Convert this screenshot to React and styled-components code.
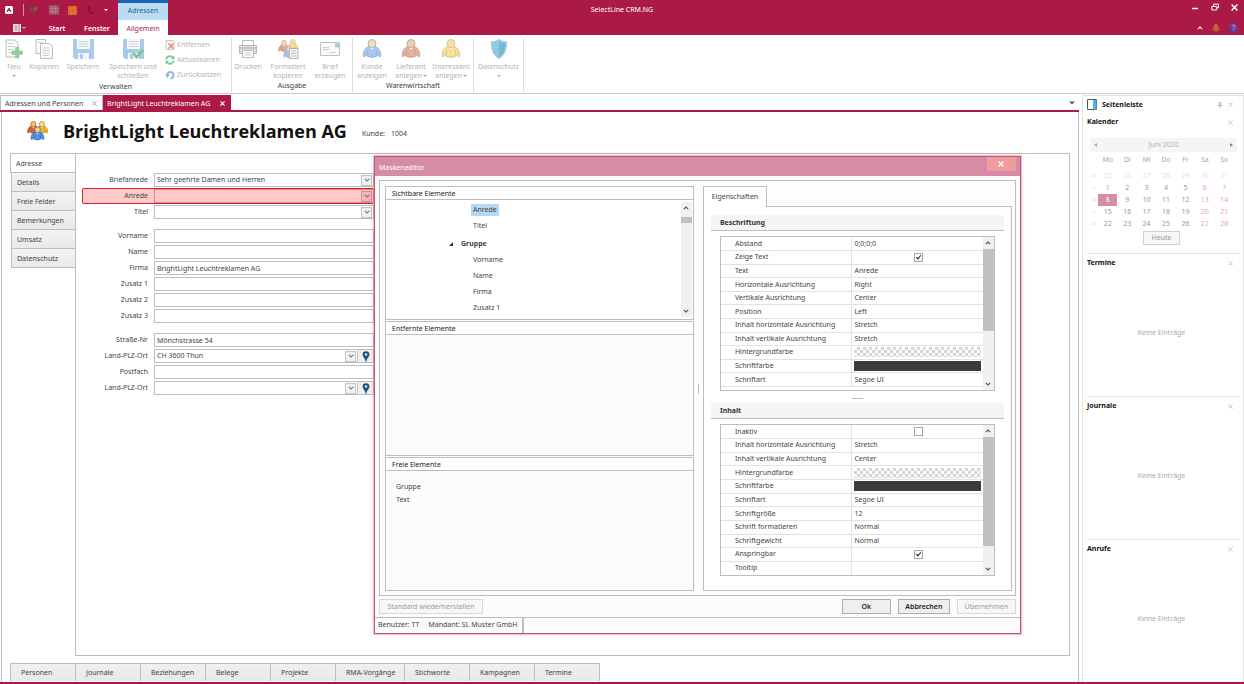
import React from "react";
import styled, { createGlobalStyle, css } from "styled-components";

const FONT = '"Noto Sans", "Open Sans", sans-serif';
const C = {
  brand: "#ab1a47",
  pink: "#d68ca4",
  line: "#bdbdbd",
  soft: "#e2e2e2",
  text: "#444444",
  dim: "#b4b4b4",
};

const Global = createGlobalStyle`
  *, *::before, *::after { box-sizing: border-box; }
  body { margin: 0; background: #fff; color: ${C.text}; font: 7px/10px ${FONT}; }
  button, input, select { font: inherit; color: inherit; margin: 0; padding: 0; border: 0; border-radius: 0; background: none; }
  h1, h2, h3, ul { margin: 0; padding: 0; font-size: inherit; list-style: none; }
  svg { display: block; flex: none; }
`;

const Page = styled.div`
  display: flex;
  flex-direction: column;
  min-height: 100vh;
  position: relative;
  border-bottom: 2px solid ${C.brand};
`;

/* ---------- title bar ---------- */
const TitleBar = styled.header`
  display: grid;
  grid-template-columns: 1fr auto 1fr;
  height: 20px;
  background: ${C.brand};
  color: #fff;
  align-items: center;
`;
const TitleLeft = styled.div`
  display: flex;
  height: 20px;
`;
const QuickAccess = styled.div`
  display: flex;
  align-items: center;
  gap: 9px;
  width: 118px;
  padding-left: 4px;
`;
const ContextTab = styled.div`
  width: 50px;
  border-top: 3px solid #1c62b0;
  background: #b9dbf4;
  color: #2a5f95;
  text-align: center;
  line-height: 15px;
`;
const TitleText = styled.div`
  line-height: 20px;
`;
const WindowButtons = styled.div`
  display: flex;
  justify-content: flex-end;
  gap: 12px;
  padding: 0 6px 6px 0;
`;
const IconButton = styled.button`
  display: flex;
  align-items: center;
  justify-content: center;
  color: ${(p) => p.$color || "inherit"};
`;

const TabStrip = styled.nav`
  display: flex;
  height: 15px;
  background: ${C.brand};
  color: #fff;
  align-items: stretch;
`;
const FileMenu = styled.button`
  display: flex;
  align-items: center;
  justify-content: center;
  gap: 1px;
  width: 38px;
`;
const RibbonTab = styled.button`
  width: ${(p) => p.$w}px;
  line-height: 17px;
  font-weight: ${(p) => (p.$active ? 400 : 600)};
  background: ${(p) => (p.$active ? "#fff" : "transparent")};
  color: ${(p) => (p.$active ? C.brand : "#fff")};
`;
const StripEnd = styled.div`
  display: flex;
  align-items: center;
  gap: 9px;
  margin-left: auto;
  padding-right: 6px;
`;

/* ---------- ribbon ---------- */
const Ribbon = styled.div`
  display: flex;
  height: 59px;
  padding: 3px 0 1px;
  border-bottom: 1px solid #d9c3ca;
`;
const Group = styled.section`
  display: flex;
  flex-direction: column;
  width: ${(p) => p.$w}px;
  border-right: 1px solid #dcdcdc;
`;
const GroupItems = styled.div`
  display: flex;
  flex: 1;
`;
const GroupName = styled.div`
  text-align: center;
  color: #3c3c3c;
  line-height: 12px;
`;
const BigButton = styled.button`
  display: flex;
  flex-direction: column;
  align-items: center;
  width: ${(p) => p.$w}px;
  color: ${C.dim};
  line-height: 9px;
  white-space: nowrap;
  & > svg { margin: 1px 0 3px; }
`;
const Caption = styled.span`
  display: flex;
  align-items: center;
  justify-content: center;
  gap: 1px;
  height: 9px;
`;
const SmallStack = styled.div`
  display: flex;
  flex-direction: column;
  gap: 3px;
  padding: 1px 0 0 5px;
`;
const SmallButton = styled.button`
  display: flex;
  align-items: center;
  gap: 2px;
  height: 12px;
  color: ${C.dim};
`;
const Caret = styled.span`
  border: 2px solid transparent;
  border-top-color: ${(p) => p.$color || "#a8a8a8"};
  border-bottom-width: 0;
`;

/* ---------- workspace ---------- */
const Workspace = styled.div`
  display: flex;
  flex: 1;
  gap: 3px;
  padding-top: 1px;
`;
const Main = styled.main`
  display: flex;
  flex-direction: column;
  flex: 1;
  min-width: 0;
`;
const DocTabs = styled.div`
  display: flex;
  align-items: stretch;
  height: 17px;
  border-bottom: 2px solid ${C.brand};
`;
const DocTab = styled.div`
  display: flex;
  align-items: center;
  justify-content: space-between;
  width: ${(p) => p.$w}px;
  padding: 1px 5px 0 4px;
  white-space: nowrap;
  border: 1px solid ${C.line};
  border-bottom: 0;
  ${(p) =>
    p.$active &&
    css`
      background: ${C.brand};
      border-color: ${C.brand};
      padding-left: 3px;
      color: #fff;
    `}
`;
const DocMenu = styled.button`
  margin-left: auto;
  padding-right: 4px;
`;
const Doc = styled.div`
  display: flex;
  flex-direction: column;
  flex: 1;
  border: 1px solid ${C.line};
  border-width: 0 1px;
  margin-left: 1px;
  padding-left: 8px;
`;
const DocHeader = styled.div`
  display: flex;
  align-items: center;
  gap: 15px;
  height: 41px;
  padding: 0 0 4px 17px;
  h1 {
    font-family: "Open Sans", sans-serif;
    font-size: 18px;
    line-height: 26px;
    color: #111;
  }
`;
const Customer = styled.div`
  display: flex;
  gap: 6px;
  padding-top: 6px;
`;
const DocBody = styled.div`
  display: flex;
  flex: 1;
  margin-right: 8px;
`;
const SideTabs = styled.div`
  display: flex;
  flex-direction: column;
  width: 66px;
`;
const SideTab = styled.button`
  height: 19px;
  padding: 1px 0 0 5px;
  text-align: left;
  border: 1px solid ${C.line};
  border-top: 0;
  background: linear-gradient(#f3f3f3, #e9e9e9);
  margin-left: 1px;
  ${(p) =>
    p.$active &&
    css`
      background: #fff;
      border-top: 1px solid ${C.line};
      border-right: 0;
      height: 20px;
      margin-left: 0;
    `}
`;
const FormPanel = styled.form`
  flex: 1;
  min-width: 0;
  border: 1px solid ${C.line};
  margin-left: -1px;
  padding: 18px 0 0 6px;
`;
const FormRows = styled.div`
  display: flex;
  flex-direction: column;
  width: 292px;
`;
const Row = styled.div`
  display: flex;
  align-items: center;
  height: 16px;
  margin-top: ${(p) => (p.$gap ? 8 : 0)}px;
  box-shadow: ${(p) => (p.$marked ? "inset 0 0 0 1px #d3202c" : "none")};
  background: ${(p) => (p.$marked ? "#ffc9c9" : "transparent")};
  border-radius: 2px;
`;
const RowLabel = styled.label`
  width: 72px;
  padding-right: 6px;
  text-align: right;
`;
const Field = styled.div`
  display: flex;
  flex: 1;
  height: 14px;
  align-items: center;
  border: 1px solid ${(p) => (p.$marked ? "#e08a8a" : C.line)};
`;
const TextInput = styled.input`
  width: 100%;
  height: 12px;
  padding-left: 2px;
  outline: 0;
`;
const Select = styled.select`
  appearance: none;
  flex: 1;
  min-width: 0;
  height: 12px;
  padding-left: 2px;
  outline: 0;
`;
const DropMark = styled.span`
  display: flex;
  align-items: center;
  justify-content: center;
  width: 11px;
  height: 11px;
  margin-right: 1px;
  border: 1px solid ${(p) => (p.$marked ? "#d98f8f" : "#c6c6c6")};
  background: ${(p) => (p.$marked ? "#f3b5b5" : "#f1f1f1")};
  pointer-events: none;
`;
const PinButton = styled.button`
  display: flex;
  align-items: center;
  justify-content: center;
  width: 16px;
  height: 12px;
  background: #f0f0f0;
  border-left: 1px solid #c6c6c6;
`;
const BottomTabs = styled.div`
  display: flex;
  margin: 7px 0 1px;
  border-left: 1px solid ${C.line};
`;
const BottomTab = styled.button`
  width: ${(p) => (p.$wide ? 69 : 65)}px;
  height: 18px;
  padding: 1px 0 0 10px;
  text-align: left;
  white-space: nowrap;
  border: 1px solid ${C.line};
  border-left: 0;
  border-bottom: 0;
  background: linear-gradient(#f0f0f0, #e8e8e8);
`;

/* ---------- sidebar ---------- */
const Sidebar = styled.aside`
  display: flex;
  flex-direction: column;
  width: 162px;
  border: 1px solid ${C.soft};
  border-bottom: 0;
  padding: 0 2px 0 4px;
`;
const PanelTitle = styled.div`
  display: flex;
  align-items: center;
  gap: 5px;
  height: ${(p) => p.$h || 18}px;
  padding-right: 8px;
  h2, h3 {
    flex: 1;
    color: #111;
    font-weight: 700;
  }
`;
const SidePanel = styled.section`
  display: flex;
  flex-direction: column;
  flex: ${(p) => (p.$grow ? "1" : "none")};
  border-bottom: 1px solid ${C.soft};
  &:last-child { border-bottom: 0; }
`;
const Empty = styled.p`
  display: flex;
  flex: 1;
  align-items: center;
  justify-content: center;
  margin: 0 5px 0 0;
  padding-bottom: 2px;
  color: #aaa;
`;
const CalHead = styled.div`
  display: flex;
  align-items: center;
  justify-content: space-between;
  height: 14px;
  margin: 7px 4px 0 3px;
  padding: 0 4px;
  background: #f5f5f5;
  color: #b0b0b0;
`;
const CalTable = styled.table`
  width: 145px;
  margin-left: 2px;
  border-collapse: collapse;
  table-layout: fixed;
  text-align: center;
  th, td { padding: 0; font-weight: 400; height: 12px; }
  thead th { height: 18px; padding-bottom: 2px; color: #a9a9a9; }
  th:first-child { width: 9px; }
  tbody th { font-size: 4px; color: #ddd; }
`;
const Day = styled.td`
  color: ${(p) => (p.$out ? (p.$end ? "#f7dede" : "#e2e2e2") : p.$end ? "#eda5a5" : "#999")};
  ${(p) =>
    p.$today &&
    css`
      background: ${C.pink};
      color: #fff;
    `}
`;
const TodayRow = styled.div`
  display: flex;
  justify-content: center;
  margin: 1px 5px 8px 0;
`;
const TodayButton = styled.button`
  width: 37px;
  height: 14px;
  border: 1px solid #d0d0d0;
  background: #f6f6f6;
  color: #999;
`;

/* ---------- dialog ---------- */
const Dialog = styled.div`
  position: absolute;
  left: 374px;
  top: 156px;
  width: 52vw;
  min-width: 640px;
  border: 1px solid #b5597a;
  background: #fdfcfc;
  box-shadow: 0 0 0 1px rgba(214, 110, 140, 0.35), 0 0 5px rgba(200, 60, 100, 0.25);
`;
const DialogTitle = styled.div`
  display: flex;
  align-items: stretch;
  height: 19px;
  padding: 0 4px 5px;
  background: ${C.pink};
  color: #fff;
  h2 {
    flex: 1;
    font-weight: 400;
    line-height: 21px;
  }
`;
const CloseButton = styled.button`
  display: flex;
  align-items: center;
  justify-content: center;
  width: 29px;
  background: #ef9c9c;
  color: #fff;
`;
const DialogBody = styled.div`
  display: flex;
  gap: 9px;
  margin: 4px 4px 0;
  padding: 5px 3px 4px 5px;
  border: 1px solid ${C.line};
  background: #fdfdfd;
`;
const Lists = styled.div`
  display: flex;
  flex-direction: column;
  gap: 1px;
  flex: 1;
  position: relative;
`;
const ListBox = styled.section`
  display: flex;
  flex-direction: column;
  flex: 1 0 0;
  border: 1px solid ${C.line};
`;
const ListTitle = styled.h3`
  height: 13px;
  padding-left: 6px;
  border-bottom: 1px solid ${C.line};
  background: #fff;
  color: #222;
  font-weight: 400;
  line-height: 14px;
`;
const ListArea = styled.div`
  display: flex;
  flex: 1;
  padding: ${(p) => (p.$tree ? "2px 1px" : "9px 10px")};
  background: ${(p) => (p.$tree ? "#fff" : "repeating-linear-gradient(#fcfcfc 0 3px, #fafafa 3px 4px)")};
`;
const Tree = styled.ul`
  flex: 1;
`;
const TreeItem = styled.li`
  display: flex;
  align-items: center;
  gap: ${(p) => (p.$group ? 6 : 0)}px;
  height: 16px;
  padding-left: ${(p) => (p.$group ? 62 : 84)}px;
  margin-top: ${(p) => (p.$group ? 2 : 0)}px;
  font-weight: ${(p) => (p.$group ? 700 : 400)};
  span {
    padding: 1px 2px;
    background: ${(p) => (p.$selected ? "#b5d9f5" : "transparent")};
  }
`;
const FreeList = styled.ul`
  line-height: 13px;
`;
const Splitter = styled.div`
  position: absolute;
  left: 100%;
  top: 49%;
  width: 1px;
  height: 10px;
  margin-left: 4px;
  background: ${C.line};
`;
const Properties = styled.div`
  display: flex;
  flex-direction: column;
  flex: 1;
`;
const PropTab = styled.button`
  width: 64px;
  height: 21px;
  border: 1px solid ${C.line};
  border-bottom: 0;
  background: #fff;
  margin-bottom: -1px;
  z-index: 1;
`;
const PropPanel = styled.div`
  border: 1px solid ${C.line};
  background: #fff;
  padding: 8px 7px 14px;
`;
const SectionTitle = styled.h3`
  height: 16px;
  padding-left: 9px;
  border-bottom: 1px solid ${C.line};
  background: #f5f5f5;
  color: #333;
  line-height: 16px;
`;
const PropBox = styled.div`
  display: flex;
  margin: 5px 9px 0;
  border: 1px solid ${C.line};
`;
const PropTable = styled.table`
  flex: 1;
  height: 150px;
  margin-bottom: ${(p) => (p.$rest ? 3 : 0)}px;
  border-collapse: collapse;
  table-layout: fixed;
  line-height: 8px;
  th, td {
    height: 13px;
    padding: 0;
    border-bottom: 1px solid ${C.soft};
    text-align: left;
    font-weight: 400;
    white-space: nowrap;
  }
  th { padding-left: 14px; width: 50%; }
  td { padding-left: 2px; border-left: 1px solid ${C.soft}; }
  ${(p) => !p.$rest && "tr:last-child > * { border-bottom: 0; }"}
`;
const Swatch = styled.div`
  height: 10px;
  margin-right: 2px;
  background: ${(p) => (p.$solid ? "#3b3b3b" : "repeating-conic-gradient(#d4d4d4 0 25%, #fff 0 50%) 0 0 / 6px 6px")};
`;
const Check = styled.input`
  appearance: none;
  display: block;
  position: relative;
  width: 9px;
  height: 9px;
  margin: 0 auto;
  border: 1px solid #a5a5a5;
  background: #fff;
  &:checked::after {
    content: "";
    position: absolute;
    left: 2px;
    top: 0;
    width: 3px;
    height: 5px;
    border: solid #222;
    border-width: 0 1px 1px 0;
    transform: rotate(40deg);
  }
`;
const Grip = styled.div`
  width: 11px;
  margin: 7px auto 4px;
  border-top: 1px solid ${C.line};
`;
const Bar = styled.div`
  display: flex;
  flex-direction: column;
  width: 11px;
  background: #f0f0f0;
  button {
    display: flex;
    align-items: center;
    justify-content: center;
    height: 12px;
  }
`;
const Track = styled.div`
  flex: 1;
  padding-top: ${(p) => p.$offset || 0}px;
`;
const Thumb = styled.div`
  height: ${(p) => p.$h}px;
  background: #c1c1c1;
`;
const Actions = styled.div`
  display: flex;
  gap: 7px;
  padding: 3px 4px;
`;
const ActionButton = styled.button`
  width: ${(p) => p.$w}px;
  height: 15px;
  margin-right: ${(p) => (p.$push ? "auto" : 0)};
  border: 1px solid #adadad;
  background: #efefef;
  color: #222;
  font-weight: 600;
  &:disabled {
    border-color: #d8d8d8;
    background: #f7f7f7;
    color: #9c9c9c;
    font-weight: 400;
  }
`;
const Status = styled.div`
  display: flex;
  border-top: 1px solid ${C.line};
  span {
    padding: 2px 4px 3px 3px;
  }
  span + span {
    padding-left: 5px;
    border-right: 2px solid ${C.line};
  }
`;

/* ---------- drawings ---------- */
const Cross = ({ s = 5, w = 1, c = "currentColor" }) => (
  <svg width={s} height={s} viewBox="0 0 6 6" stroke={c} strokeWidth={w} aria-hidden="true">
    <path d="M.5.5l5 5M5.5.5l-5 5" />
  </svg>
);
const Chevron = ({ up, c = "#555" }) => (
  <svg width="6" height="4" viewBox="0 0 6 4" fill="none" stroke={c} strokeWidth="1.1" aria-hidden="true">
    <path d={up ? "M.8 3.2L3 1l2.2 2.2" : "M.8.8L3 3 5.2.8"} />
  </svg>
);
const Pin = () => (
  <svg width="8" height="11" viewBox="0 0 8 11" aria-hidden="true">
    <path d="M4 .3a3.4 3.4 0 0 1 3.4 3.4C7.400 6 4.700 7 4.400 10.800H3.600C3.300 7 .6 6 .6 3.700A3.400 3.400 0 0 1 4 .3z" fill="#17527f" />
    <circle cx="4" cy="3.500" r="1.300" fill="#d8ecf7" />
  </svg>
);
const NewIcon = () => (
  <svg width="20" height="20" viewBox="0 0 20 20" fill="none">
    <path d="M2 1h9l3 3v14H2z" fill="#fafafa" stroke="#bdbdbd" />
    <path d="M4 4.500h5M4 7.500h7M4 10.500h6M4 13.500h5" stroke="#cfcfcf" />
    <path d="M11.500 8.500h3.500v3.500h3.500v3.500H15V19h-3.500v-3.500H8V12h3.500z" fill="#8fd09a" stroke="#7bc088" strokeWidth=".5" />
  </svg>
);
const CopyIcon = () => (
  <svg width="20" height="20" viewBox="0 0 20 20" fill="#fcfcfc" stroke="#bdbdbd">
    <path d="M2 .5h9.500v14H2z" />
    <path d="M6.500 4.500H15l3.500 3V19.500h-12z" />
    <path d="M4 3.500h5M8.500 9h7M8.500 11.500h7M8.500 14h7M8.500 16.500h7" stroke="#cfcfcf" />
  </svg>
);
const SaveIcon = ({ check }) => (
  <svg width="21" height="20" viewBox="0 0 21 20">
    <path d="M0 0h21v20H2l-2-2z" fill="#a9cbe9" />
    <path d="M4 0h13v10H4z" fill="#f6f9fb" />
    <path d="M5.500 2.500h10M5.500 5h10M5.500 7.500h10" stroke="#c9d3da" />
    <path d="M5 14h11v6H5z" fill="#eef3f7" />
    <path d="M7 15h3v5H7z" fill="#a9cbe9" />
    {check && <path d="M10 14l3.500 4L20 11" fill="none" stroke="#7cc58a" strokeWidth="2.600" />}
  </svg>
);
const RemoveIcon = () => (
  <svg width="10" height="10" viewBox="0 0 10 10" fill="none">
    <path d="M1 .5h7l1 1v8H1z" fill="#f5f5f5" stroke="#d0c4c0" />
    <path d="M3.500 3.500l5 5M8.500 3.500l-5 5" stroke="#ef8f78" strokeWidth="1.600" />
  </svg>
);
const RefreshIcon = () => (
  <svg width="10" height="10" viewBox="0 0 10 10" fill="none" stroke="#84c493" strokeWidth="1.700">
    <path d="M1.200 4.500A3.800 3.800 0 0 1 8 2.700M8.800 5.500A3.800 3.800 0 0 1 2 7.300" />
    <path d="M9.500 .5v3.700H5.800zM.5 9.500V5.800h3.700z" fill="#84c493" stroke="none" />
  </svg>
);
const ResetIcon = () => (
  <svg width="10" height="10" viewBox="0 0 10 10" fill="none">
    <path d="M2 5.500A3.300 3.300 0 1 1 5.500 8.500" stroke="#8db6dc" strokeWidth="2" />
    <path d="M0 4.500h5L2.500 8z" fill="#8db6dc" />
  </svg>
);
const PrinterIcon = () => (
  <svg width="20" height="20" viewBox="0 0 20 20" fill="#f4f4f4" stroke="#b9b9b9">
    <path d="M4.500 1.500h11v6h-11z" fill="#fff" />
    <path d="M1.500 6.500h17v8h-17z" fill="#dedede" />
    <path d="M2 9h16" stroke="#aaa" />
    <path d="M4.500 11.500h11v7h-11z" fill="#fff" />
    <path d="M6.500 14h7M6.500 16h7" stroke="#cfcfcf" />
  </svg>
);
const Figure = ({ x, y, k = 1, fill, line, skin = "#f5dfae" }) => (
  <g transform={`translate(${x} ${y}) scale(${k})`} stroke={line}>
    <path d="M6.500 8C3 9 .8 13 .8 17c0 2 1.700 2 2.700.5L5 14.500V18q5 2.500 10 0v-3.500l1.500 3c1 1.500 2.700 1.500 2.700-.5 0-4-2.200-8-5.700-9z" fill={fill} />
    <path d="M5 14.500l1-3M15 14.500l-1-3" fill="none" />
    <path d="M7 8l3 4 3-4z" fill="#fff" strokeWidth=".6" />
    <circle cx="10" cy="4.800" r="4.200" fill={skin} />
  </g>
);
const PersonIcon = ({ fill, line, skin }) => (
  <svg width="20" height="20" viewBox="0 0 20 21">
    <Figure x={0} y={0} fill={fill} line={line} skin={skin} />
  </svg>
);
const FormatIcon = () => (
  <svg width="21" height="20" viewBox="0 0 21 20">
    <Figure x={9} y={0} k={0.58} fill="#f5dc96" line="#d9bc74" />
    <Figure x={0} y={1} k={0.6} fill="#e3a48e" line="#cf9680" />
    <Figure x={5} y={7} k={0.6} fill="#a5c8ef" line="#8db1d9" />
    <path d="M11.500 9.500H20v10h-8.500z" fill="#fafafa" stroke="#b0b0b0" />
    <path d="M13 12h5.500M13 14.500h5.500M13 17h5.500" stroke="#bbb" />
  </svg>
);
const LetterIcon = () => (
  <svg width="20" height="20" viewBox="0 0 20 20" fill="none">
    <path d="M.5 3.500h19v13H.5z" fill="#fafafa" stroke="#c0c0c0" />
    <path d="M3 8.500h6M3 10.500h6M9 13.500h7" stroke="#ccc" />
    <path d="M15 4.500h4V9l-2-1-2 .5z" fill="#9cc8e4" />
  </svg>
);
const ShieldIcon = () => (
  <svg width="20" height="20" viewBox="0 0 20 21">
    <path d="M10 .5c2.500 1.700 5 2.500 8 2.500 0 8-1.500 13.500-8 17.500C3.500 16.500 2 11 2 3c3 0 5.500-.8 8-2.500z" fill="#8ccbe2" stroke="#a8c4d2" />
    <path d="M10 2.500c2 1.200 4 2 6.300 2.100-.2 6-1.300 10.500-6.300 13.900z" fill="#71b9da" />
  </svg>
);
const GroupLogo = () => (
  <svg width="21" height="20" viewBox="0 0 21 20">
    <Figure x={0} y={0} k={0.64} fill="#d9602c" line="#a8522a" skin="#f2c261" />
    <Figure x={8.500} y={0} k={0.64} fill="#f3b62c" line="#b8801e" skin="#f8d983" />
    <Figure x={3.500} y={5.500} k={0.7} fill="#4c94e6" line="#2a68a8" skin="#f4cf7c" />
  </svg>
);

const QuickIcons = () => (
  <>
    <svg width="10" height="10" viewBox="0 0 10 10">
      <rect x="1" y="1" width="8" height="8" rx="1.500" fill="#fff" />
      <path d="M3 7l2-4 2 4M3 5.500h4" stroke={C.brand} fill="none" />
    </svg>
    <svg width="16" height="12" viewBox="0 0 16 12">
      <path d="M-.5 0" />
      <circle cx="8" cy="4.500" r="1.700" fill="#8c4a2c" />
      <circle cx="12.500" cy="4.500" r="1.700" fill="#96602c" />
      <path d="M6 6h8.500L10.500 10z" fill="#7a4050" />
      <path d="M.5 0v12" stroke="#d88aa2" />
    </svg>
    <svg width="11" height="10" viewBox="0 0 11 10">
      <path d="M1 .5h10v9H1z" fill="#a45a6e" />
      <path d="M1 3.500h10M1 6.500h10M4.300.5v9M7.600.5v9" stroke="#b98c98" strokeWidth=".6" />
    </svg>
    <svg width="9" height="9" viewBox="0 0 9 9">
      <path d="M0 0h9v9H0z" fill="#d8642c" />
      <path d="M0 3h9M0 6h9M3 0v9M6 0v9" stroke="#e88a50" strokeWidth=".5" />
    </svg>
    <svg width="9" height="10" viewBox="0 0 9 10">
      <path d="M2.500.5C-.5 4.500 3 9.500 8 9l-1.500-2.500-1.500.5Q3.500 5.500 3.500 4L5 3z" fill="#7d1536" />
    </svg>
  </>
);

/* ---------- content ---------- */
const Scroll = ({ offset, thumb }) => (
  <Bar>
    <button type="button" aria-label="Nach oben"><Chevron up /></button>
    <Track $offset={offset}><Thumb $h={thumb} /></Track>
    <button type="button" aria-label="Nach unten"><Chevron /></button>
  </Bar>
);

const Big = ({ w, icon, lines, caret, below }) => (
  <BigButton $w={w} type="button">
    {icon}
    {lines.map((l, i) => (
      <Caption key={l}>
        {l}
        {caret && i === lines.length - 1 && <Caret />}
      </Caption>
    ))}
    {below && <Caption><Caret /></Caption>}
  </BigButton>
);

const fields = [
  { id: "briefanrede", label: "Briefanrede", value: "Sehr geehrte Damen und Herren", select: true },
  { id: "anrede", label: "Anrede", value: "", select: true, marked: true },
  { id: "titel", label: "Titel", value: "", select: true },
  { id: "vorname", label: "Vorname", value: "", gap: true },
  { id: "name", label: "Name", value: "" },
  { id: "firma", label: "Firma", value: "BrightLight Leuchtreklamen AG" },
  { id: "zusatz1", label: "Zusatz 1", value: "" },
  { id: "zusatz2", label: "Zusatz 2", value: "" },
  { id: "zusatz3", label: "Zusatz 3", value: "" },
  { id: "strasse", label: "Straße-Nr", value: "Mönchstrasse 54", gap: true },
  { id: "ort", label: "Land-PLZ-Ort", value: "CH 3600 Thun", select: true, pin: true },
  { id: "postfach", label: "Postfach", value: "" },
  { id: "ort2", label: "Land-PLZ-Ort", value: "", select: true, pin: true },
];

const caption = [
  ["Abstand", "0;0;0;0"],
  ["Zeige Text", true],
  ["Text", "Anrede"],
  ["Horizontale Ausrichtung", "Right"],
  ["Vertikale Ausrichtung", "Center"],
  ["Position", "Left"],
  ["Inhalt horizontale Ausrichtung", "Stretch"],
  ["Inhalt vertikale Ausrichtung", "Stretch"],
  ["Hintergrundfarbe", <Swatch />],
  ["Schriftfarbe", <Swatch $solid />],
  ["Schriftart", "Segoe UI"],
];
const content = [
  ["Inaktiv", false],
  ["Inhalt horizontale Ausrichtung", "Stretch"],
  ["Inhalt vertikale Ausrichtung", "Center"],
  ["Hintergrundfarbe", <Swatch />],
  ["Schriftfarbe", <Swatch $solid />],
  ["Schriftart", "Segoe UI"],
  ["Schriftgröße", "12"],
  ["Schrift formatieren", "Normal"],
  ["Schriftgewicht", "Normal"],
  ["Anspringbar", true],
  ["Tooltip", ""],
];

const Props = ({ rows, thumb, rest }) => (
  <PropBox>
    <PropTable $rest={rest}>
      <tbody>
        {rows.map(([k, v]) => (
          <tr key={k}>
            <th scope="row">{k}</th>
            <td>{typeof v === "boolean" ? <Check type="checkbox" defaultChecked={v} aria-label={k} /> : v}</td>
          </tr>
        ))}
      </tbody>
    </PropTable>
    <Scroll thumb={thumb} />
  </PropBox>
);

const weeks = [
  [22, 25, 26, 27, 28, 29, 30, 31],
  [23, 1, 2, 3, 4, 5, 6, 7],
  [24, 8, 9, 10, 11, 12, 13, 14],
  [25, 15, 16, 17, 18, 19, 20, 21],
  [26, 22, 23, 24, 25, 26, 27, 28],
];

const PanelClose = () => (
  <IconButton type="button" aria-label="Schließen" $color="#b5b5b5"><Cross /></IconButton>
);

export default function App() {
  return (
    <>
      <Global />
      <Page>
        <TitleBar>
          <TitleLeft>
            <QuickAccess>
              <QuickIcons />
              <Caret $color="#fff" />
            </QuickAccess>
            <ContextTab>Adressen</ContextTab>
          </TitleLeft>
          <TitleText>SelectLine CRM.NG</TitleText>
          <WindowButtons>
            <IconButton type="button" aria-label="Minimieren">
              <svg width="8" height="8" viewBox="0 0 8 8"><path d="M1 5.500h6" stroke="#fff" strokeWidth="1.400" /></svg>
            </IconButton>
            <IconButton type="button" aria-label="Wiederherstellen">
              <svg width="8" height="8" viewBox="0 0 8 8" fill="none" stroke="#fff"><path d="M2.500 3V1.200h5v3.500H6M.8 3.500h5v3.500h-5z" /></svg>
            </IconButton>
            <IconButton type="button" aria-label="Schließen"><Cross s={7} w={1.2} /></IconButton>
          </WindowButtons>
        </TitleBar>
        <TabStrip>
          <FileMenu type="button" aria-label="Datei">
            <svg width="8" height="8" viewBox="0 0 8 8"><path d="M0 0h8v8H0z" fill="#f3e3e8" /><path d="M1.500 2h3M1.500 4h3M1.500 6h3M6 0v8" stroke="#94606f" strokeWidth=".8" /></svg>
            <Caret $color="#e0a8b8" />
          </FileMenu>
          <RibbonTab type="button" $w={38}>Start</RibbonTab>
          <RibbonTab type="button" $w={42}>Fenster</RibbonTab>
          <RibbonTab type="button" $w={50} $active>Allgemein</RibbonTab>
          <StripEnd>
            <IconButton type="button" aria-label="Menüband einklappen"><Chevron up c="#fff" /></IconButton>
            <IconButton type="button" aria-label="Benachrichtigungen">
              <svg width="8" height="8" viewBox="0 0 8 8"><path d="M4 0c2.300 0 2.500 2 2.500 4L8 6.500H0L1.500 4C1.500 2 1.700 0 4 0zM3 7h2v1H3z" fill="#c9602f" /></svg>
            </IconButton>
            <IconButton type="button" aria-label="Hilfe">
              <svg width="9" height="9" viewBox="0 0 9 9"><circle cx="4.500" cy="4.500" r="4.500" fill="#6a3c8c" /><path d="M3 3.500C3 1.500 6 1.500 6 3.300 6 4.500 4.500 4.300 4.500 5.500M4.500 6.300v1" fill="none" stroke="#c3a6dd" /></svg>
            </IconButton>
          </StripEnd>
        </TabStrip>

        <Ribbon>
          <Group $w={232}>
            <GroupItems>
              <Big w={28} icon={<NewIcon />} lines={["Neu"]} below />
              <Big w={32} icon={<CopyIcon />} lines={["Kopieren"]} />
              <Big w={46} icon={<SaveIcon />} lines={["Speichern"]} />
              <Big w={54} icon={<SaveIcon check />} lines={["Speichern und", "schließen"]} />
              <SmallStack>
                <SmallButton type="button"><RemoveIcon />Entfernen</SmallButton>
                <SmallButton type="button"><RefreshIcon />Aktualisieren</SmallButton>
                <SmallButton type="button"><ResetIcon />Zurücksetzen</SmallButton>
              </SmallStack>
            </GroupItems>
            <GroupName>Verwalten</GroupName>
          </Group>
          <Group $w={121}>
            <GroupItems>
              <Big w={32} icon={<PrinterIcon />} lines={["Drucken"]} />
              <Big w={48} icon={<FormatIcon />} lines={["Formatiert", "kopieren"]} />
              <Big w={36} icon={<LetterIcon />} lines={["Brief", "erzeugen"]} />
            </GroupItems>
            <GroupName>Ausgabe</GroupName>
          </Group>
          <Group $w={121}>
            <GroupItems>
              <Big w={38} icon={<PersonIcon fill="#a5c8f2" line="#93b2d8" />} lines={["Kunde", "anzeigen"]} />
              <Big w={40} icon={<PersonIcon fill="#e2b29c" line="#caa08d" skin="#f0d2b0" />} lines={["Lieferant", "anlegen"]} caret />
              <Big w={40} icon={<PersonIcon fill="#f6e29a" line="#d9c37c" />} lines={["Interessent", "anlegen"]} caret />
            </GroupItems>
            <GroupName>Warenwirtschaft</GroupName>
          </Group>
          <Group $w={50}>
            <GroupItems>
              <Big w={49} icon={<ShieldIcon />} lines={["Datenschutz"]} below />
            </GroupItems>
          </Group>
        </Ribbon>

        <Workspace>
          <Main>
            <DocTabs>
              <DocTab $w={103}>Adressen und Personen <IconButton type="button" aria-label="Tab schließen" $color="#888"><Cross /></IconButton></DocTab>
              <DocTab $w={128} $active>BrightLight Leuchtreklamen AG <IconButton type="button" aria-label="Tab schließen"><Cross w={1.4} /></IconButton></DocTab>
              <DocMenu type="button" aria-label="Tabs">
                <svg width="6" height="4" viewBox="0 0 6 4"><path d="M0 .5h6l-3 3z" fill="#555" /></svg>
              </DocMenu>
            </DocTabs>
            <Doc>
              <DocHeader>
                <GroupLogo />
                <h1>BrightLight Leuchtreklamen AG</h1>
                <Customer><span>Kunde:</span><span>1004</span></Customer>
              </DocHeader>
              <DocBody>
                <SideTabs>
                  {["Adresse", "Details", "Freie Felder", "Bemerkungen", "Umsatz", "Datenschutz"].map((t, i) => (
                    <SideTab key={t} type="button" $active={i === 0}>{t}</SideTab>
                  ))}
                </SideTabs>
                <FormPanel>
                  <FormRows>
                    {fields.map((f) => (
                      <Row key={f.id} $gap={f.gap} $marked={f.marked}>
                        <RowLabel htmlFor={f.id}>{f.label}</RowLabel>
                        <Field $marked={f.marked}>
                          {f.select ? (
                            <>
                              <Select id={f.id} defaultValue={f.value}><option>{f.value}</option></Select>
                              <DropMark $marked={f.marked}><Chevron c="#777" /></DropMark>
                            </>
                          ) : (
                            <TextInput id={f.id} defaultValue={f.value} />
                          )}
                          {f.pin && <PinButton type="button" aria-label="Karte anzeigen"><Pin /></PinButton>}
                        </Field>
                      </Row>
                    ))}
                  </FormRows>
                </FormPanel>
              </DocBody>
              <BottomTabs>
                {["Personen", "Journale", "Beziehungen", "Belege", "Projekte", "RMA-Vorgänge", "Stichworte", "Kampagnen", "Termine"].map((t) => (
                  <BottomTab key={t} type="button" $wide={t === "RMA-Vorgänge"}>{t}</BottomTab>
                ))}
              </BottomTabs>
            </Doc>
          </Main>

          <Sidebar>
            <PanelTitle $h={17}>
              <svg width="10" height="11" viewBox="0 0 10 11"><path d="M.5.5h9v10h-9z" fill="#fff" stroke="#4a5a66" /><path d="M6 1h3.500v9.500H6z" fill="#4fb0e8" /></svg>
              <h2>Seitenleiste</h2>
              <IconButton type="button" aria-label="Anheften" $color="#aaa">
                <svg width="6" height="6" viewBox="0 0 6 6" fill="none" stroke="currentColor"><path d="M2 .5h2v3H2zM1 3.500h4M3 3.500V6" strokeWidth=".8" /></svg>
              </IconButton>
              <PanelClose />
            </PanelTitle>
            <SidePanel>
              <PanelTitle><h3>Kalender</h3><PanelClose /></PanelTitle>
              <CalHead>
                <IconButton type="button" aria-label="Vorheriger Monat"><svg width="3" height="4" viewBox="0 0 3 4"><path d="M3 0v4L0 2z" fill="#aaa" /></svg></IconButton>
                Juni 2020
                <IconButton type="button" aria-label="Nächster Monat"><svg width="3" height="4" viewBox="0 0 3 4"><path d="M0 0v4l3-2z" fill="#888" /></svg></IconButton>
              </CalHead>
              <CalTable>
                <thead>
                  <tr><th />{["Mo", "Di", "Mi", "Do", "Fr", "Sa", "So"].map((d) => <th key={d} scope="col">{d}</th>)}</tr>
                </thead>
                <tbody>
                  {weeks.map(([n, ...days], w) => (
                    <tr key={n}>
                      <th scope="row">{n}</th>
                      {days.map((d, i) => (
                        <Day key={d} $out={w === 0} $end={i > 4} $today={w === 2 && i === 0}>{d}</Day>
                      ))}
                    </tr>
                  ))}
                </tbody>
              </CalTable>
              <TodayRow><TodayButton type="button">Heute</TodayButton></TodayRow>
            </SidePanel>
            {["Termine", "Journale", "Anrufe"].map((t) => (
              <SidePanel key={t} $grow>
                <PanelTitle><h3>{t}</h3><PanelClose /></PanelTitle>
                <Empty>Keine Einträge</Empty>
              </SidePanel>
            ))}
          </Sidebar>
        </Workspace>

        <Dialog role="dialog" aria-labelledby="dialog-title">
          <DialogTitle>
            <h2 id="dialog-title">Maskeneditor</h2>
            <CloseButton type="button" aria-label="Schließen"><Cross s={6} w={1.2} /></CloseButton>
          </DialogTitle>
          <DialogBody>
            <Lists>
              <ListBox>
                <ListTitle>Sichtbare Elemente</ListTitle>
                <ListArea $tree>
                  <Tree>
                    <TreeItem $selected><span>Anrede</span></TreeItem>
                    <TreeItem><span>Titel</span></TreeItem>
                    <TreeItem $group>
                      <svg width="4" height="4" viewBox="0 0 4 4"><path d="M4 0v4H0z" fill="#333" /></svg>
                      <span>Gruppe</span>
                    </TreeItem>
                    <TreeItem><span>Vorname</span></TreeItem>
                    <TreeItem><span>Name</span></TreeItem>
                    <TreeItem><span>Firma</span></TreeItem>
                    <TreeItem><span>Zusatz 1</span></TreeItem>
                  </Tree>
                  <Scroll offset={3} thumb={6} />
                </ListArea>
              </ListBox>
              <ListBox>
                <ListTitle>Entfernte Elemente</ListTitle>
                <ListArea />
              </ListBox>
              <ListBox>
                <ListTitle>Freie Elemente</ListTitle>
                <ListArea>
                  <FreeList><li>Gruppe</li><li>Text</li></FreeList>
                </ListArea>
              </ListBox>
              <Splitter />
            </Lists>
            <Properties>
              <PropTab type="button">Eigenschaften</PropTab>
              <PropPanel>
                <SectionTitle>Beschriftung</SectionTitle>
                <Props rows={caption} thumb={82} rest />
                <Grip />
                <SectionTitle>Inhalt</SectionTitle>
                <Props rows={content} thumb={109} />
              </PropPanel>
            </Properties>
          </DialogBody>
          <Actions>
            <ActionButton type="button" $w={104} $push disabled>Standard wiederherstellen</ActionButton>
            <ActionButton type="button" $w={49}>Ok</ActionButton>
            <ActionButton type="button" $w={52}>Abbrechen</ActionButton>
            <ActionButton type="button" $w={59} disabled>Übernehmen</ActionButton>
          </Actions>
          <Status><span>Benutzer: TT</span><span>Mandant: SL Muster GmbH</span></Status>
        </Dialog>
      </Page>
    </>
  );
}
